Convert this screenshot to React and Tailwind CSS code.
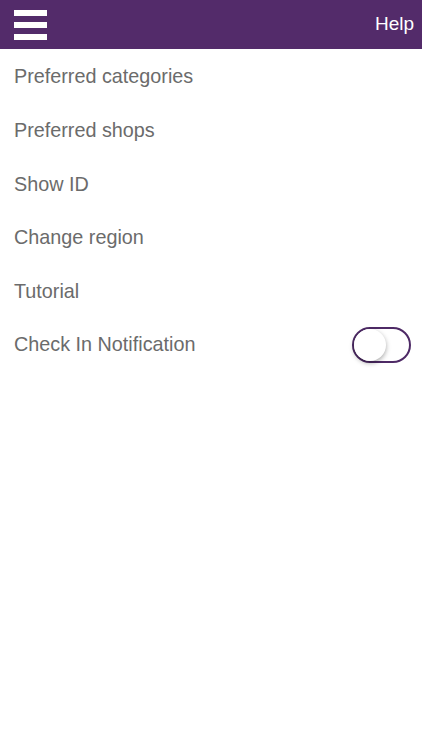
import { useState } from 'react';

const items = ['Preferred categories', 'Preferred shops', 'Show ID', 'Change region', 'Tutorial'];

export default function App() {
    const [checkIn, setCheckIn] = useState(false);

    return (
        <div className="w-[422px] h-[750px] bg-white" style={{ fontFamily: '"Liberation Sans", Arial, sans-serif' }}>
            <header className="h-[49px] bg-[#532b6a] flex items-center justify-between pl-[14px] pr-[8px]">
                <button className="flex flex-col gap-[6px] w-[33px]">
                    <span className="block h-[6px] bg-white" />
                    <span className="block h-[6px] bg-white" />
                    <span className="block h-[6px] bg-white" />
                </button>
                <span className="text-white text-[19px]">Help</span>
            </header>

            <ul>
                {items.map((label) => (
                    <li key={label} className="h-[53.6px] flex items-center px-[14px] pt-[3px] text-[19.8px] text-[#6b6b6b]">
                        {label}
                    </li>
                ))}
                <li className="h-[53.6px] flex items-center justify-between pl-[14px] pr-[11px] pt-[3px] text-[19.8px] text-[#6b6b6b]">
                    <span>Check In Notification</span>
                    <button
                        onClick={() => setCheckIn(!checkIn)}
                        className={`relative w-[59px] h-[36px] rounded-full border-2 border-[#4e2a66] ${checkIn ? 'bg-[#532b6a]' : 'bg-white'}`}
                    >
                        <span
                            className={`absolute top-[0px] w-[32px] h-[32px] rounded-full bg-white shadow-[0_2px_5px_rgba(0,0,0,0.35)] ${checkIn ? 'left-[23px]' : 'left-[0px]'}`}
                        />
                    </button>
                </li>
            </ul>
        </div>
    );
}
